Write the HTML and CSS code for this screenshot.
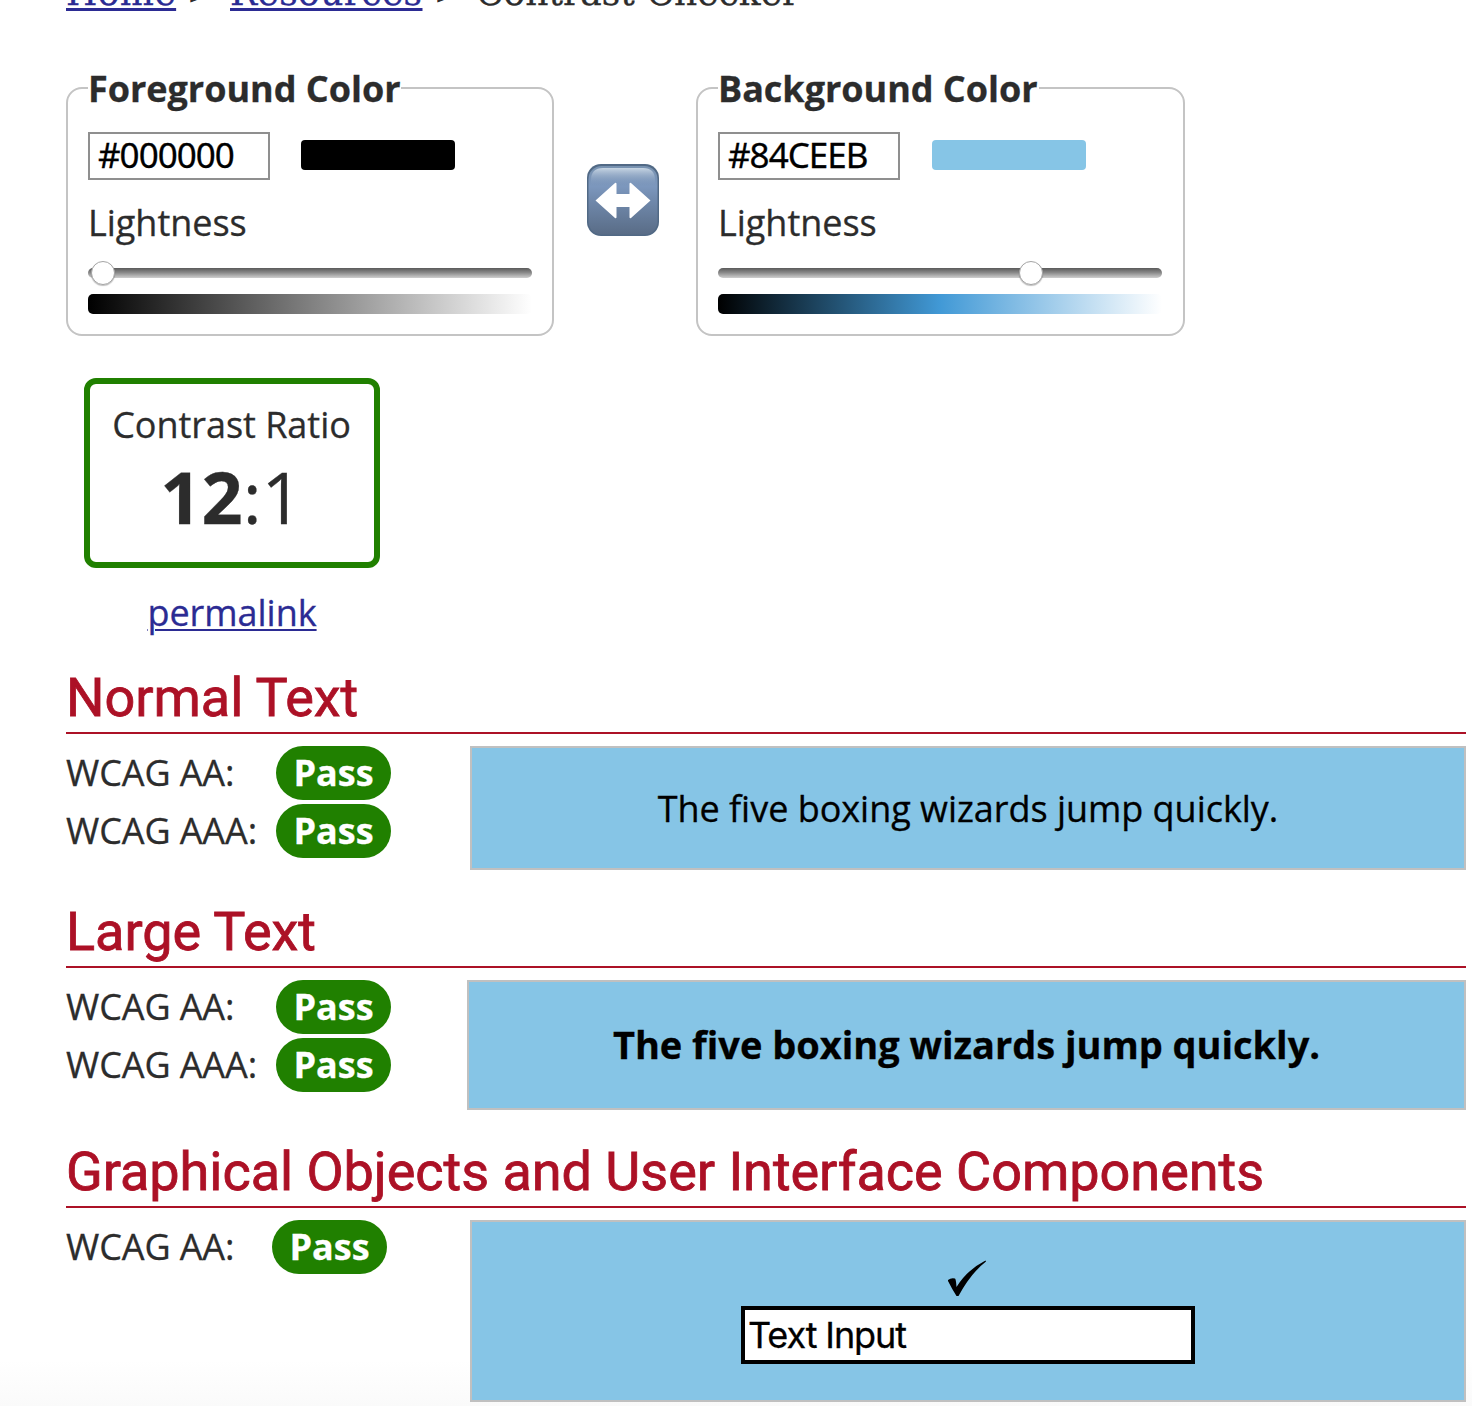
FILE: index.html
```html
<!DOCTYPE html>
<html lang="en">
<head>
<meta charset="utf-8">
<title>Contrast Checker</title>
<link rel="stylesheet" href="styles.css">
</head>
<body>
<nav class="crumbs"><a class="c1" href="#">Home</a><span class="sep s1">&gt;</span><a class="c2" href="#">Resources</a><span class="sep s2">&gt;</span><span class="c3">Contrast Checker</span></nav>
<main>
  <form class="pickers">
    <fieldset>
      <legend>Foreground Color</legend>
      <div class="value"><input class="hex" type="text" value="#000000" aria-label="Foreground hex value"><span class="swatch black"></span></div>
      <div class="label">Lightness</div>
      <div class="track"><span class="thumb" style="left:3px"></span></div>
      <div class="ramp grey"></div>
    </fieldset>
    <svg class="swap" viewBox="0 0 72 72" role="img" aria-label="Swap colors">
      <defs>
        <linearGradient id="face" x1="0" y1="0" x2="0" y2="1"><stop offset="0" stop-color="#7892b0"/><stop offset=".3" stop-color="#7c97bd"/><stop offset=".5" stop-color="#7089ac"/><stop offset="1" stop-color="#596c86"/></linearGradient>
        <linearGradient id="shine" x1="0" y1="0" x2="0" y2="1"><stop offset="0" stop-color="#c8d6e4"/><stop offset="1" stop-color="#7c97bd" stop-opacity="0"/></linearGradient>
      </defs>
      <rect width="72" height="72" rx="14" fill="#516985"/>
      <rect x="1.5" y="2" width="69" height="68.500" rx="13" fill="url(#face)"/>
      <path d="M4 22V16Q4 4 16 4H56Q68 4 68 16V22Z" fill="url(#shine)"/>
      <path d="M8.500 36.500 28 19Q29.500 18 29.500 20V30H42.500V20Q42.500 18 44 19L63.500 36.500 44 54Q42.500 55 42.500 53V43H29.500V53Q29.500 55 28 54Z" fill="#fff"/>
    </svg>
    <fieldset class="wide">
      <legend>Background Color</legend>
      <div class="value"><input class="hex" type="text" value="#84CEEB" aria-label="Background hex value"><span class="swatch sky"></span></div>
      <div class="label">Lightness</div>
      <div class="track"><span class="thumb" style="left:301px"></span></div>
      <div class="ramp blue"></div>
    </fieldset>
  </form>

  <div class="result">
    <div class="ratio">
      <div class="caption">Contrast Ratio</div>
      <div class="number"><b>12</b>:1</div>
    </div>
    <a class="permalink" href="#">permalink</a>
  </div>

  <section>
    <h2>Normal Text</h2>
    <div class="row">
      <div class="grades">
        <div class="grade"><span class="level">WCAG AA:</span><span class="pass">Pass</span></div>
        <div class="grade"><span class="level">WCAG AAA:</span><span class="pass">Pass</span></div>
      </div>
      <div class="sample normal"><span>The five boxing wizards jump quickly.</span></div>
    </div>
  </section>
  <section>
    <h2>Large Text</h2>
    <div class="row">
      <div class="grades narrow">
        <div class="grade"><span class="level">WCAG AA:</span><span class="pass">Pass</span></div>
        <div class="grade"><span class="level">WCAG AAA:</span><span class="pass">Pass</span></div>
      </div>
      <div class="sample large"><span>The five boxing wizards jump quickly.</span></div>
    </div>
  </section>
  <section>
    <h2>Graphical Objects and User Interface Components</h2>
    <div class="row">
      <div class="grades">
        <div class="grade"><span class="level short">WCAG AA:</span><span class="pass">Pass</span></div>
      </div>
      <div class="sample objects">
        <svg class="check" viewBox="0 0 40 38" aria-hidden="true"><path d="M0 20Q3 17.500 7 18.500Q8 19 8.500 27Q19 10 37.500 0.500L38 1.500Q23 13 10.500 36H8.500Q4 29 0 21Z"/></svg>
        <input class="demo" type="text" value="Text Input" aria-label="Sample input">
      </div>
    </div>
  </section>
</main>
</body>
</html>
```
FILE: styles.css
```css
* { box-sizing: border-box; }
html, body { margin: 0; height: 1406px; overflow: hidden; }
body {
  font: 36px/50px "Open Sans", "Noto Sans", sans-serif;
  color: #2c2c2c;
  -webkit-text-stroke: .3px currentColor;
  letter-spacing: -.03px;
  background: linear-gradient(#fff 1360px, #fafafa 1406px);
}
a { color: #2b2b93; text-decoration-thickness: 2px; }

.crumbs {
  height: 63px;
  padding-left: 66px;
  display: flex;
  font: 36px/50px "DejaVu Serif", serif;
  white-space: nowrap;
}
.crumbs > * { margin-top: -32px; height: 50px; }
.crumbs a { text-underline-offset: 3px; text-decoration-thickness: 2.5px; }
.c1 { width: 110px; letter-spacing: .4px; }
.c2 { width: 193px; letter-spacing: .4px; }
.c3 { letter-spacing: .05px; }
.sep { font-size: 27px; -webkit-text-stroke-width: 1px; }
.crumbs .sep { margin-top: -31px; }
.s1 { width: 54px; padding-left: 12px; }
.s2 { width: 53px; padding-left: 12px; }

main { padding: 0 6px 0 66px; }

.pickers { display: flex; height: 273px; }
fieldset {
  width: 488px;
  min-width: 0;
  margin: 0;
  padding: 19px 20px 20px;
  border: 2px solid #c4c4c4;
  border-radius: 16px;
}
.wide { width: 489px; padding-right: 21px; }
.wide .value { gap: 32px; }
legend { height: 50px; padding: 0 1px 0 0; line-height: 52px; font-weight: 700; white-space: nowrap; }
.value { display: flex; align-items: center; gap: 31px; height: 48px; }
.hex {
  width: 182px;
  height: 48px;
  padding: 0 8px 4px;
  border: 2px solid #8f8f8f;
  border-radius: 0;
  background: #fff;
  color: #000;
  font: 35px/40px "Noto Sans", sans-serif;
  letter-spacing: -1px;
}
.swatch { width: 154px; height: 30px; margin-top: -2px; border-radius: 4px; }
.black { background: #000; }
.sky { background: #86c5e6; }
.label { margin: 18px 0 20px; }
.track {
  position: relative;
  height: 10px;
  border-radius: 5px;
  background: linear-gradient(#5a5a5a, #888 45%, #cfcfcf);
}
.thumb {
  position: absolute;
  top: -7px;
  width: 24px;
  height: 24px;
  border: 1px solid #a5a5a5;
  border-radius: 50%;
  background: #fff;
  box-shadow: 0 1px 1px rgba(0, 0, 0, .25);
}
.ramp { height: 20px; margin-top: 16px; border-radius: 5px; }
.grey { background: linear-gradient(90deg, #000, #808080 50%, #fff); }
.blue { background: linear-gradient(90deg, #000, #4199d6 50%, #fff); }
.swap { width: 72px; height: 72px; margin: 101px 37px 0 33px; flex: none; }

.result {
  width: 296px;
  height: 288px;
  margin: 42px 0 0 18px;
  text-align: center;
}
.ratio {
  height: 190px;
  padding: 16px 0 0;
  border: 6px solid #208000;
  border-radius: 12px;
  white-space: nowrap;
}
.caption { margin-right: 1px; }
.number { font-size: 72px; line-height: 98px; margin: -3px 0 0 -1px; }
.permalink { display: block; margin-top: 20px; text-underline-offset: 3px; }

section { margin-bottom: 30px; }
h2 {
  margin: 0 0 12px;
  padding-bottom: 2px;
  border-bottom: 2px solid #ac1126;
  font: 400 54px/64px Roboto, sans-serif;
  -webkit-text-stroke-width: .8px;
  color: #ac1126;
  white-space: nowrap;
}
.row { display: flex; }
.grades { width: 404px; flex: none; display: flex; flex-direction: column; gap: 4px; }
.narrow { width: 401px; }
.grade { display: flex; height: 54px; line-height: 54px; white-space: nowrap; }
.level { width: 210px; letter-spacing: -.1px; }
.short { width: 206px; }
.pass {
  width: 115px;
  border-radius: 27px;
  background: #208000;
  color: #fff;
  font-weight: 700;
  text-align: center;
}
.sample {
  flex: 1;
  display: flex;
  align-items: center;
  justify-content: center;
  border: 2px solid #c0c0c0;
  background: #86c5e6;
  color: #000;
  white-space: nowrap;
}
.normal { height: 124px; padding-top: 2px; }
.large { height: 130px; padding-bottom: 2px; font-size: 38px; font-weight: 700; }
.objects { height: 182px; flex-direction: column; justify-content: flex-start; padding-top: 38px; }
.check { width: 40px; height: 38px; flex: none; }
.demo {
  width: 454px;
  height: 58px;
  margin-top: 8px;
  padding: 0 3px;
  border: 4px solid #000;
  border-radius: 0;
  background: #fff;
  color: #000;
  font: 36px/48px Inter, sans-serif;
  letter-spacing: -1.1px;
}
```
